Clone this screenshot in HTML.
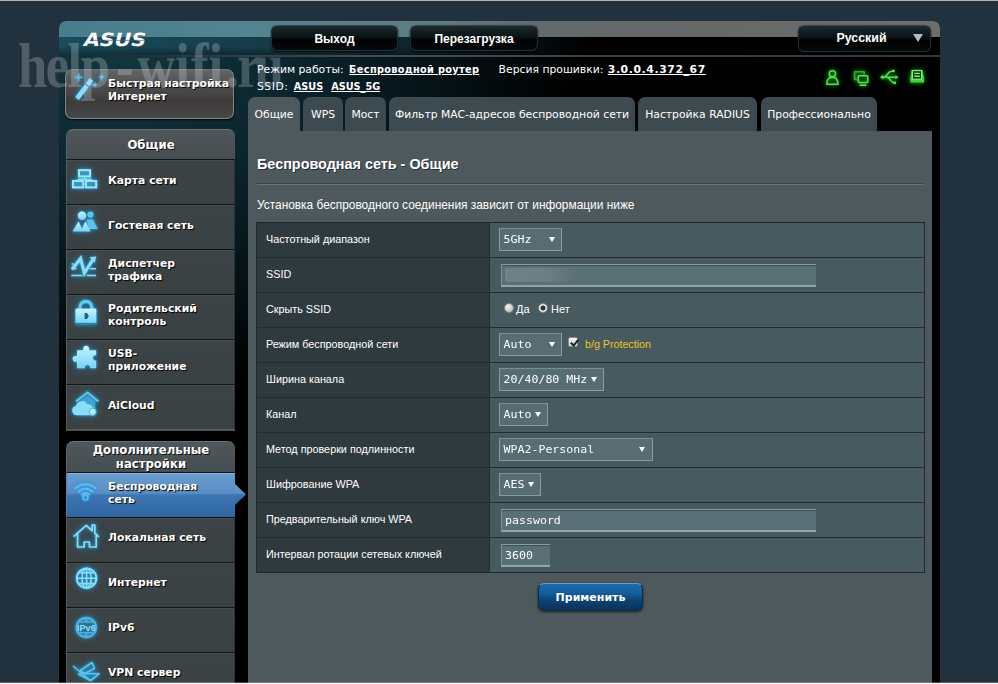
<!DOCTYPE html>
<html lang="ru">
<head>
<meta charset="utf-8">
<title>ASUS Wireless Router - Беспроводная сеть - Общие</title>
<style>
*{box-sizing:border-box;margin:0;padding:0}
html,body{width:998px;height:684px;overflow:hidden}
body{background:#21313d;font-family:"Liberation Sans",Arial,sans-serif;font-size:12px;color:#fff;position:relative}
.abs{position:absolute}
.vd{font-family:"DejaVu Sans","Liberation Sans",sans-serif}
.cb{font-family:"DejaVu Sans Condensed","DejaVu Sans",sans-serif;font-size:10.8px;letter-spacing:.35px}
#topline{left:0;top:0;width:998px;height:4px;background:linear-gradient(#b9bdc0 0,#a9adb0 22%,#2b3238 30%,#262f37 60%,#21313d 100%)}
#botline{left:0;top:682px;width:998px;height:2px;background:linear-gradient(rgba(255,255,255,.25) 0,rgba(255,255,255,.25) 40%,#f4f4f4 55%,#fff 100%)}
#page{left:59px;top:21px;width:881px;height:663px;background:#000;border-radius:7px 7px 0 0;overflow:hidden}
#banner{left:0;top:0;width:881px;height:36px;background:linear-gradient(90deg,#467d8d 0%,#548491 22%,#5f7c83 40%,#626a6c 55%,#676868 75%,#6e6e6e 100%)}
#banner2{left:0;top:16px;width:881px;height:20px;background:linear-gradient(rgba(0,0,0,0) 0%,rgba(0,0,0,0) 45%,rgba(0,0,0,.42) 100%),linear-gradient(90deg,#1b4c5c 0%,#153b48 25%,#0a1a20 48%,#000 60%,#000 100%)}
#bannerline{left:0;top:34px;width:881px;height:2px;background:linear-gradient(90deg,rgba(60,80,88,0) 0%,rgba(80,90,94,.8) 35%,rgba(62,64,66,.85) 100%)}
#glow{left:0;top:36px;width:520px;height:380px;background:radial-gradient(ellipse 470px 340px at 50px 0px,#12363f 0%,#0c2730 35%,#06151a 65%,#000 100%)}
.hbtn{height:26px;border-radius:6px;background:linear-gradient(#1c2b31 0%,#0b1316 45%,#010202 60%,#060a0c 100%);border:1px solid #22323a;border-top-color:#36484f;text-align:center;font-weight:bold;font-size:12px;line-height:25px;padding-top:1px;color:#fff;box-shadow:0 1px 2px rgba(0,0,0,.8)}
#qis{left:6px;top:48px;width:169px;height:50px;border-radius:7px;background:linear-gradient(#626566 0%,#515152 28%,#3f3b3b 65%,#484848 100%);border:1px solid #7f8789;border-top-color:#70777a;box-shadow:0 1px 2px #000}
.mhead{left:7px;width:169px;background:linear-gradient(#4f575a,#474e51);border-radius:7px 7px 0 0;text-align:center;font-weight:bold;font-size:11.7px;color:#fff;text-shadow:1px 1px 0 #111;border-top:1px solid #697274;border-left:1px solid #5b6467}
.mitem{left:7px;width:169px;height:45px;background:linear-gradient(#3d4447,#3a4143);border-top:1px solid #121516;border-left:1px solid #565c5f;border-right:1px solid #2b3134;box-shadow:inset 0 1px 0 #474e51}
.mitem.act{background:linear-gradient(#6a9ed1 0%,#5a8ec4 46%,#3d76b3 50%,#2f66a4 100%);border-left:1px solid #4a80b8;border-right:0;box-shadow:inset 0 1px 0 #86b4e0}
.mtxt{left:41px;font-weight:bold;font-size:10.8px;line-height:13px;color:#fff;text-shadow:1px 1px 1px #000;white-space:nowrap}
.mico{left:3px;top:3px;width:34px;height:40px;overflow:visible;filter:drop-shadow(0 0 1.5px rgba(40,170,230,.95)) drop-shadow(0 0 3px rgba(30,140,200,.55))}
.tab{top:76px;height:35px;border-radius:7px 7px 0 0;background:#3d4a4f;color:#fff;font-size:10.8px;line-height:36px;text-align:center;white-space:nowrap}
.tab.on{background:#4d595d}
#content{left:189px;top:110px;width:684px;height:553px;background:#4d595d}
#title{left:198px;top:135px;font-weight:bold;font-size:14.4px;line-height:17px;color:#fff;white-space:nowrap;text-shadow:1px 1px 0 rgba(0,0,0,.5)}
#hr{left:198px;top:162px;width:667px;height:2px;background:#39464a;border-bottom:1px solid #687478}
#desc{left:198px;top:177px;font-size:11.9px;line-height:14px;white-space:nowrap;color:#fff}
#tbl{left:197px;top:201px;width:669px;height:351px;border:1px solid #1f292d;background:#475a5f}
.row{left:0;width:667px;height:35px;border-bottom:1px solid #222c30}
.lab{left:0;top:0;width:233px;height:34px;background:#2f3a3e;border-right:1px solid #222c30;padding-left:9px;font-size:10.8px;line-height:32px;color:#fff;white-space:nowrap}
.sel{top:5px;height:23px;background:#576d73;border:1px solid #8a9a9e;border-top-color:#7c8d92;font-family:"DejaVu Sans Mono","Liberation Mono",monospace;font-size:11.6px;line-height:21px;padding-left:3.5px;color:#fff;white-space:nowrap}
.sel i{position:absolute;right:6px;top:8px;width:0;height:0;border-left:3px solid transparent;border-right:3px solid transparent;border-top:5px solid #fff}
.inp{top:6px;height:23px;background:#5a7077;border-top:1px solid #8c9da2;border-left:1px solid #7f9196;border-right:0;border-bottom:2px solid #92a4a9;box-shadow:inset 0 1px 0 #3f4f54;font-family:"DejaVu Sans Mono","Liberation Mono",monospace;font-size:11.6px;line-height:20px;padding-left:3px;color:#fff}
#apply{left:479px;top:562px;width:105px;height:28px;border-radius:6px;background:linear-gradient(#1b6cb0 0%,#125a97 40%,#0d4475 60%,#0a3257 100%);border:1px solid #0c2d4c;border-top-color:#5f9fd3;text-align:center;font-weight:bold;font-size:11px;line-height:27px;color:#fff;box-shadow:0 1px 3px rgba(0,0,0,.6)}
.m{display:inline-block;transform:scaleY(.86);transform-origin:50% 72%}
.rad{width:10px;height:10px;border-radius:50%;background:radial-gradient(circle at 40% 35%,#f4f4f4,#c9c9c9 60%,#9a9a9a);border:1px solid #8b8b8b}
.rad.on{background:radial-gradient(circle,#333 0,#333 2.2px,#e8e8e8 2.8px,#d0d0d0 100%)}
.rl{font-size:11px;line-height:13px;color:#fff}
.chk{width:10px;height:10px;background:linear-gradient(#f5f5f5,#d6d6d6);border:1px solid #8b8b8b;border-radius:2px}
.chk:after{content:"";position:absolute;left:2.5px;top:-.5px;width:3px;height:6px;border:solid #222;border-width:0 2px 2px 0;transform:rotate(40deg)}
</style>
</head>
<body>
<div id="topline" class="abs"></div>
<svg width="0" height="0" style="position:absolute"><defs><linearGradient id="cg" x1="0" y1="0" x2="0" y2="1"><stop offset="0" stop-color="#c9f2fd"/><stop offset="1" stop-color="#74d4f4"/></linearGradient></defs></svg>
<div id="page" class="abs">
  <div id="banner" class="abs"></div>
  <div id="banner2" class="abs"></div>
  <div id="glow" class="abs"></div>
  <div id="bannerline" class="abs"></div>
  <svg class="abs" id="logo" style="left:22px;top:11px;overflow:visible" width="66" height="15" viewBox="0 0 66 15">
    <text transform="translate(1.5 14) skewX(-14) scale(1 .92)" font-family="DejaVu Sans, Liberation Sans, sans-serif" font-weight="bold" font-size="19.8" fill="#fff" textLength="62" lengthAdjust="spacingAndGlyphs">ASUS</text>
    <path d="M13 8.3h50" stroke="#2c6272" stroke-width=".9" opacity=".75"/>
  </svg>
  <div class="abs hbtn" style="left:212px;top:4px;width:127px">Выход</div>
  <div class="abs hbtn" style="left:351px;top:4px;width:128px">Перезагрузка</div>
  <div class="abs hbtn" style="left:739px;top:4px;width:133px;height:27px;padding-right:6px;padding-top:0;font-size:12.4px">Русский</div>
  <div class="abs" style="left:854px;top:13px;width:0;height:0;border-left:5px solid transparent;border-right:5px solid transparent;border-top:8px solid #b4bcc0"></div>
  <div class="abs vd" id="st1" style="left:198px;top:41px;font-size:10.8px;line-height:15px;white-space:nowrap;color:#fff">Режим работы: <b class="cb" style="margin-left:2px"><u>Беспроводной роутер</u></b><span style="display:inline-block;width:19.4px"></span>Версия прошивки: <b style="letter-spacing:.62px;margin-left:1px"><u>3.0.0.4.372_67</u></b></div>
  <div class="abs vd" id="st2" style="left:198px;top:58px;font-size:10.8px;line-height:15px;white-space:nowrap;color:#fff"><span style="letter-spacing:.5px">SSID:</span> <b class="cb" style="margin-left:2px;letter-spacing:0"><u>ASUS</u></b><span style="display:inline-block;width:8px"></span><b class="cb" style="letter-spacing:0"><u>ASUS_5G</u></b></div>
  <svg class="abs" id="sticons" style="left:761px;top:45px;overflow:visible;filter:drop-shadow(0 0 1.5px rgba(20,200,20,.9)) drop-shadow(0 0 3px rgba(10,140,10,.5))" width="112" height="24" viewBox="820 66 112 24">
    <g fill="none" stroke="#4be64b" stroke-width="1.5" stroke-linejoin="round">
      <circle cx="832.4" cy="73.8" r="3.1"/><path d="M826.8 84.2c0-4.6 2.4-7 5.6-7s5.6 2.4 5.6 7z"/>
      <path d="M857 79.4h-2.4v-7.6h9.6v2.6" stroke="#2fae2f"/><rect x="858.2" y="75.8" width="9.6" height="6.8" rx="1"/><path d="M859.6 85.2h6.8" stroke-width="1.6"/>
      <path d="M882 77.2h15M885 77.2l3.6-4.4c1-1.2 2-1.6 3.4-1.6M888 77.2l3.4 4.2c.8 1 1.6 1.4 2.8 1.4" stroke-width="1.5"/><path d="M880 77.2l3.4-2.4v4.8zM898.4 77.2l-3-2v4z" fill="#4be64b" stroke="none"/><circle cx="893.4" cy="71" r="1.2" fill="#9cf59c" stroke="none"/><rect x="893.6" y="81.6" width="2.4" height="2.4" fill="#4be64b" stroke="none"/>
    </g>
    <path d="M910.4 78.6l1.4-8.6h10.6l1.6 8.6v4h-13.6z" fill="#35d835"/><rect x="912.4" y="70.6" width="9.2" height="8.6" fill="#0c3a0c" stroke="#7ff07f" stroke-width="1.2"/><path d="M914.2 73.4h5.6M914.2 76.2h5.6" stroke="#7ff07f" stroke-width="1.4"/>
  </svg>
  <div id="qis" class="abs"><svg class="abs mico" style="left:3px;top:-2px" viewBox="0 0 34 40"><path d="M6.2 29.1L15.8 16.5l3.6 2.8L9.8 31.9z" fill="#86def9"/><path d="M16.7 15.4l4-5.3 3.6 2.8-4 5.3z" fill="#86def9"/><path d="M9.9 5.6v7.6M6.1 9.4h7.6M32.5 6.4v5M30 8.9h5M25.8 14.4v4.4M23.6 16.6h4.4" stroke="#4fc2ea" stroke-width="1.3"/></svg><div class="abs mtxt vd" style="left:42px;top:7px">Быстрая настройка<br>Интернет</div></div>
  <div class="abs mhead vd" style="top:108px;height:30px;line-height:31px">Общие</div>
  <div class="abs mitem" style="top:138px"><svg class="abs mico" viewBox="0 0 34 40"><g fill="#3a93b8" stroke="#9be5fb" stroke-width="2.1"><rect x="9" y="7.2" width="11" height="6.2"/><rect x="3" y="18" width="10.2" height="6.4"/><rect x="16" y="18" width="10.2" height="6.4"/></g><path d="M14.6 14v2.2M8 16.2h13.4M8 16.2v1M21.4 16.2v1" stroke="#86def9" stroke-width="1.5" fill="none"/></svg><div class="abs mtxt vd" style="top:14px">Карта сети</div></div>
  <div class="abs mitem" style="top:183px"><svg class="abs mico" viewBox="0 0 34 40"><g fill="#86def9"><circle cx="20.4" cy="6.6" r="3.1" fill="#5cc4ea"/><path d="M16.5 11.5h6.5l4.8 9.5h-9z" fill="#5cc4ea"/><circle cx="12" cy="7.8" r="4.2" fill="url(#cg)"/><path d="M8.6 13.2l3.4 7.5 3.4-7.5 5.2 10.3H2.6z" fill="url(#cg)"/></g></svg><div class="abs mtxt vd" style="top:14px">Гостевая сеть</div></div>
  <div class="abs mitem" style="top:228px"><svg class="abs mico" viewBox="0 0 34 40"><path d="M2 16.5L10.6 5.6l3.8 14.6L22.6 7" stroke="#86def9" stroke-width="3.3" fill="none" stroke-linejoin="miter"/><path d="M19.6 4.2l6.6-.8-1.6 6.6z" fill="#86def9"/><path d="M1.4 22.6h11M16.6 22.6H26M20 15.8h6M1.6 11h2M5 15.8h1.6" stroke="#86def9" stroke-width="1.5"/></svg><div class="abs mtxt vd" style="top:7px">Диспетчер<br>трафика</div></div>
  <div class="abs mitem" style="top:273px"><svg class="abs mico" viewBox="0 0 34 40"><path d="M10 11V9.4a5.9 5.9 0 0 1 11.8 0V11" stroke="#62c9ee" stroke-width="3.4" fill="#1d6e92"/><rect x="5.4" y="10.6" width="21" height="14.8" rx="1.2" fill="url(#cg)"/><path d="M5.6 25.6h20.6" stroke="#2484b4" stroke-width="1.6"/><path d="M14.6 15h2.4l1.8 3-1.8 3h-2.4z" fill="#1c5f80"/></svg><div class="abs mtxt vd" style="top:7px">Родительский<br>контроль</div></div>
  <div class="abs mitem" style="top:318px"><svg class="abs mico" viewBox="0 0 34 40"><path d="M7 7.2h6.4a3.1 3.1 0 1 1 5.6 0h7.2v5.2a2.6 2.6 0 1 0 0 5v7.8h-6.2a2.6 2.6 0 1 0-5 0H7v-6.6a3.1 3.1 0 1 1 0-5.6z" fill="url(#cg)"/></svg><div class="abs mtxt vd" style="top:7px">USB-<br>приложение</div></div>
  <div class="abs mitem" style="top:363px"><svg class="abs mico" viewBox="0 0 34 40"><path d="M6 13.4L17.5 4.6 28.4 13.4" stroke="#5cc4ea" stroke-width="2" fill="none"/><path d="M10 13.5l7.5-5.8 7.6 5.8v9H10z" fill="#3fa6d0"/><path d="M6.6 27.2a4.7 4.7 0 0 1-.6-9.3 6 6 0 0 1 11.2-1.6 4.6 4.6 0 0 1 5.4 3.2h1.2v7.7z" fill="#86def9"/><circle cx="22.6" cy="23.8" r="3.6" fill="#b4ecfc" stroke="#3fa6d0" stroke-width=".8"/></svg><div class="abs mtxt vd" style="top:14px">AiCloud</div></div>
  <div class="abs" style="left:7px;top:408px;width:169px;height:2px;background:linear-gradient(#5a6063,#45494b)"></div>
  <div class="abs mhead vd" style="top:420px;height:31px;line-height:14px;padding-top:1px">Дополнительные<br>настройки</div>
  <div class="abs mitem act" style="top:451px"><svg class="abs mico" viewBox="0 0 34 40"><g fill="none" stroke="#63b9f3" stroke-width="2" stroke-linecap="round"><path d="M5.4 12.4a14.2 14.2 0 0 1 20.2 0"/><path d="M8.6 15.6a9.8 9.8 0 0 1 13.8 0"/><path d="M11.6 18.6a5.6 5.6 0 0 1 7.8 0"/><circle cx="15.5" cy="21.6" r="2.4" stroke-width="1.7"/></g></svg><div class="abs mtxt vd" style="top:7px">Беспроводная<br>сеть</div></div>
  <div class="abs mitem" style="top:496px"><svg class="abs mico" viewBox="0 0 34 40"><path d="M4.2 15.2L16.2 4.4l6 5.4V4h2.6v8.2l3.6 3.2M7.6 13v13h6.6v-5h5.2v5h6.8V13" fill="none" stroke="#86def9" stroke-width="1.7" stroke-linejoin="round" stroke-linecap="round"/></svg><div class="abs mtxt vd" style="top:12.5px">Локальная сеть</div></div>
  <div class="abs mitem" style="top:541px"><svg class="abs mico" viewBox="0 0 34 40"><g fill="none" stroke="#86def9" stroke-width="1.6"><circle cx="16.6" cy="12.2" r="9.8" stroke-width="2"/><ellipse cx="16.6" cy="12.2" rx="4.6" ry="9.8"/><path d="M16.6 2.4v19.6M6.8 12.2h19.6M8.6 6.8h16M8.6 17.6h16"/></g></svg><div class="abs mtxt vd" style="top:12.5px">Интернет</div></div>
  <div class="abs mitem" style="top:586px"><svg class="abs mico" viewBox="0 0 34 40"><g fill="none" stroke="#4fb3dc" stroke-width="1.5"><circle cx="16.3" cy="16.4" r="9.8" stroke-width="1.9"/><path d="M12 8.2a9 5 0 0 1 8.6 0M12 24.6a9 5 0 0 0 8.6 0M16.3 6.6v4M16.3 22.2v4M9.6 11h13.4M9.6 21.8h13.4"/></g><text x="16.4" y="20" text-anchor="middle" font-family="Liberation Sans, sans-serif" font-weight="bold" font-size="9.5" fill="#86def9" textLength="19" lengthAdjust="spacingAndGlyphs">IPv6</text></svg><div class="abs mtxt vd" style="top:12.5px">IPv6</div></div>
  <div class="abs mitem" style="top:631px"><svg class="abs mico" viewBox="0 0 34 40"><g fill="#1f6f93" fill-opacity=".55" stroke="#5cc4ea" stroke-width="1.6" stroke-linejoin="round"><path d="M10.5 14.5L22 6.5l2.5 6-10 5z"/><path d="M8.5 18l6-.5 14.5.3-8.5 6.7z"/><path d="M3 10l17.5 14.5" fill="none"/></g></svg><div class="abs mtxt vd" style="top:12.5px">VPN сервер</div></div>
  <svg class="abs" style="left:176px;top:452px" width="12" height="44" viewBox="0 0 12 44"><defs><linearGradient id="ag" x1="0" y1="0" x2="0" y2="1"><stop offset="0" stop-color="#6a9ed1"/><stop offset=".46" stop-color="#5a8ec4"/><stop offset=".5" stop-color="#3d76b3"/><stop offset="1" stop-color="#2f66a4"/></linearGradient></defs><polygon points="0,11 11,21.5 0,32" fill="url(#ag)"/></svg>
  <div class="abs tab vd on" style="left:189px;width:52px">Общие</div>
  <div class="abs tab vd" style="left:244px;width:40px">WPS</div>
  <div class="abs tab vd" style="left:286px;width:41px">Мост</div>
  <div class="abs tab vd" style="left:330px;width:246px">Фильтр MAC-адресов беспроводной сети</div>
  <div class="abs tab vd" style="left:579px;width:119px">Настройка RADIUS</div>
  <div class="abs tab vd" style="left:702px;width:116px">Профессионально</div>
  <div id="content" class="abs"></div>
  <div id="title" class="abs">Беспроводная сеть - Общие</div>
  <div id="hr" class="abs"></div>
  <div id="desc" class="abs">Установка беспроводного соединения зависит от информации ниже</div>
  <div id="tbl" class="abs">
    <div class="abs row" style="top:0px"><div class="abs lab">Частотный диапазон</div><div class="abs sel" style="left:242px;width:63px"><span class="m">5GHz</span><i></i></div></div>
    <div class="abs row" style="top:35px"><div class="abs lab">SSID</div><div class="abs inp" style="left:244px;width:315px"><span class="abs" style="left:3px;top:3px;width:72px;height:14px;background:linear-gradient(90deg,#6f8389,#6a7f85 60%,#5b7177);border-radius:2px"></span></div></div>
    <div class="abs row" style="top:70px"><div class="abs lab">Скрыть SSID</div><span class="abs rad" style="left:247px;top:10px"></span><span class="abs rl" style="left:259px;top:10px">Да</span><span class="abs rad on" style="left:281px;top:10px"></span><span class="abs rl" style="left:294px;top:10px">Нет</span></div>
    <div class="abs row" style="top:105px"><div class="abs lab">Режим беспроводной сети</div><div class="abs sel" style="left:242px;width:63px"><span class="m">Auto</span><i></i></div><span class="abs chk" style="left:311px;top:9px"></span><span class="abs" style="left:328px;top:10px;font-size:10.7px;line-height:13px;color:#f2c21c;white-space:nowrap">b/g Protection</span></div>
    <div class="abs row" style="top:140px"><div class="abs lab">Ширина канала</div><div class="abs sel" style="left:242px;width:105px"><span class="m">20/40/80 MHz</span><i></i></div></div>
    <div class="abs row" style="top:175px"><div class="abs lab">Канал</div><div class="abs sel" style="left:242px;width:49px"><span class="m">Auto</span><i></i></div></div>
    <div class="abs row" style="top:210px"><div class="abs lab">Метод проверки подлинности</div><div class="abs sel" style="left:242px;width:154px"><span class="m">WPA2-Personal</span><i style="right:7px"></i></div></div>
    <div class="abs row" style="top:245px"><div class="abs lab">Шифрование WPA</div><div class="abs sel" style="left:242px;width:42px"><span class="m">AES</span><i></i></div></div>
    <div class="abs row" style="top:280px"><div class="abs lab">Предварительный ключ WPA</div><div class="abs inp" style="left:244px;width:315px"><span class="m">password</span></div></div>
    <div class="abs row" style="top:315px"><div class="abs lab">Интервал ротации сетевых ключей</div><div class="abs inp" style="left:244px;width:49px"><span class="m">3600</span></div></div>
  </div>
  <div id="apply" class="abs vd">Применить</div>
</div>
<svg id="wm" class="abs" style="left:0;top:0;opacity:.25;pointer-events:none" width="320" height="120" viewBox="0 0 320 120"><text transform="scale(.835 1)" x="21.56" y="86.7" dx="0 -1.8 -1.8 -1.8 7.2 4.5 0 1.5 0 3 -2 -7" font-family="Liberation Serif, serif" font-weight="bold" font-size="63" fill="#dde5ea">help-wifi.ru</text></svg>
<div id="botline" class="abs"></div>
</body>
</html>
